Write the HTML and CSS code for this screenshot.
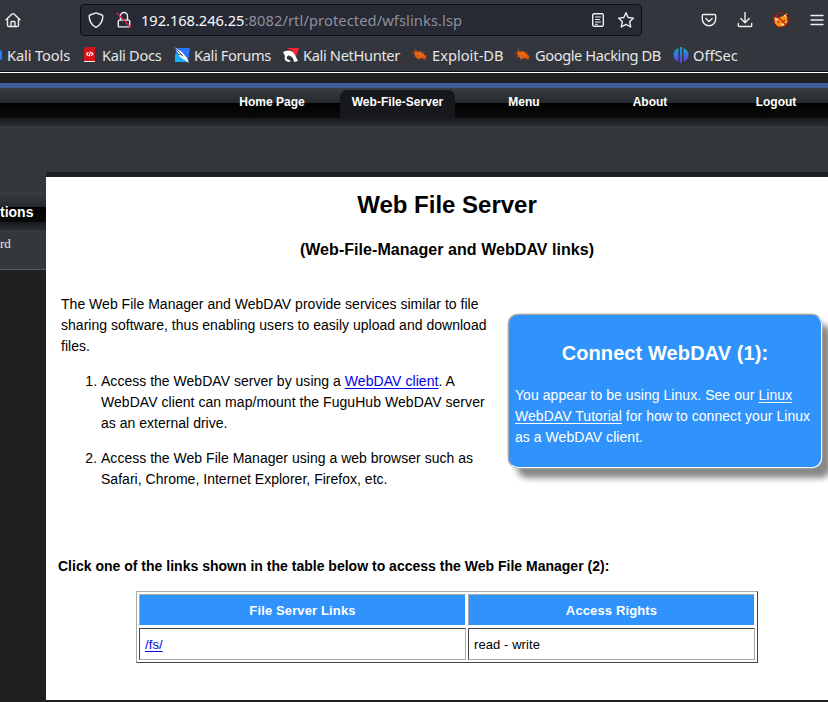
FILE: index.html
```
<!DOCTYPE html>
<html lang="en">
<head>
<meta charset="utf-8">
<title>Web File Server</title>
<link rel="stylesheet" href="styles.css">
</head>
<body>
<header class="browser">
  <div class="toolbar">
    <svg class="home" width="16" height="16" viewBox="0 0 16 16"><path d="M1 7.8 7 2.100q1-.9 2 0l6 5.700M2.500 6.700v6.200q0 1.600 1.600 1.600h7.800q1.600 0 1.600-1.600V6.700M6 14.300v-4q0-.8.8-.8h2.400q.8 0 .8.8v4"/></svg>
    <div class="urlbar">
      <svg class="shield" width="16" height="16" viewBox="0 0 16 16"><path d="M8 .9 14 3q.8.3.8 1.100c0 5.200-2.500 9.200-6.800 11.300C3.700 13.300 1.200 9.300 1.200 4.100Q1.200 3.300 2 3Z"/></svg>
      <svg class="lock" width="16" height="18" viewBox="0 0 16 18"><path d="M3.300 9.100h9.400q1 0 1 1v4.800q0 1-1 1H3.300q-1 0-1-1v-4.800q0-1 1-1M4.500 9V5a3.500 3.500 0 0 1 7 0v4"/><path class="slash" d="M1 2l13.500 14"/></svg>
      <span class="url"><b>192.168.246.25</b>:8082/rtl/protected/wfslinks.lsp</span>
      <svg class="reader" width="14" height="16" viewBox="0 0 14 16"><rect x="1.700" y="1.700" width="10.600" height="12.600" rx="1.500"/><path d="M4.500 5h5M4.500 7.500h4M4.500 10h5M4.500 12.300h2" stroke-width="1.100"/></svg>
      <svg class="star" width="18" height="18" viewBox="0 0 18 18"><path d="m9 1.700 2.200 4.800 5.300.6-3.900 3.600 1.100 5.300L9 13.400 4.300 16l1.100-5.300-3.900-3.600 5.300-.6Z"/></svg>
    </div>
    <div class="tools">
      <svg width="16" height="16" viewBox="0 0 16 16"><path d="M2.500 2.500h11q1.200 0 1.200 1.200v3.300a6.700 6.700 0 0 1-13.400 0V3.700q0-1.200 1.200-1.200M4.800 6.500 8 9.500l3.200-3"/></svg>
      <svg width="16" height="16" viewBox="0 0 16 16"><path d="M8 .5v10M3.800 6.600 8 10.700l4.200-4.100M1.300 11.500v2q0 1 1 1h11.400q1 0 1-1v-2"/></svg>
      <svg class="fox" width="16" height="16" viewBox="0 0 16 16"><path fill="#f79322" d="m1 5 4 1 5-2 4-3v6l1 3-4 4-6 1-3-3Z"/><path fill="#ffe7b8" d="m1.500 5.500 3 1.500-1.500 2Zm9-2 3-2v4ZM8 12.500l4-2-2 3.500Z"/><path fill="#302316" d="M4.500 9.500h2v1h-2Zm6-1.500h1.500v1h-1.500Z"/><circle cx="8" cy="8" r="7.300" fill="none" stroke="#c7140c" stroke-width="1"/><path d="m3 3 10 10" fill="none" stroke="#c7140c" stroke-width="1.100"/></svg>
      <svg width="14" height="16" viewBox="0 0 14 16"><path d="M1 3.500h12M1 8h12M1 12.500h12"/></svg>
    </div>
  </div>
  <nav class="bookmarks">
    <span class="mark m1"><i class="dot"></i>Kali Tools</span>
    <span class="mark m2"><svg width="16" height="16" viewBox="0 0 16 16"><path fill="#d51217" d="M2 2 4 0h10v14H2Z"/><path fill="#eee" d="M2 14h11v1H2Z"/><path fill="#851015" d="M13 1h1v14h-1Z"/><path d="M6 5.500 4.500 7 6 8.500M9.500 5.500 11 7 9.500 8.500M8.300 5l-1 4" fill="none" stroke="#fff" stroke-width="1.100"/></svg>Kali Docs</span>
    <span class="mark m3"><svg width="16" height="16" viewBox="0 0 16 16"><path fill="#2777ff" d="M2 1h14l-2 14H1Z"/><path fill="#16aefc" d="M1 7h6l7 8H1Z"/><path fill="#fff" d="m0 0 8 5 5 6 2 5-6-4-4-3-1-3Z"/><path d="m1 1 8 8M4 7l3 1" stroke="#222a35" stroke-width=".8" fill="none"/></svg>Kali Forums</span>
    <span class="mark m4"><svg width="16" height="16" viewBox="0 0 16 16"><path fill="#fb2436" d="m4 1 12 0-4 11-3-6Z"/><path fill="#fff" d="M0 5q8-4 12 3l3 6-4 1q-1-6-5-6-3 1-2 3l4 2-2 1q-6-1-4-6Z"/><path d="M1 3.500q5-2 8 .5M4 10q3-4 6 4" fill="none" stroke="#20222a" stroke-width=".8"/></svg>Kali NetHunter</span>
    <span class="mark m5"><svg width="16" height="16" viewBox="0 0 16 16"><path fill="#f06512" d="m2 4 4 1 2-1 4 3 2 3-1 2-3-1-4 1-3-3Z"/><path d="M0 6h4M3 2l3 3M2 10l4-2M6 13l2-4M12 13l-1-3M12 5l-2 2M15 9h-3M14 12l-3-2" fill="none" stroke="#c84d10" stroke-width=".8"/></svg>Exploit-DB</span>
    <span class="mark m6"><svg width="16" height="16" viewBox="0 0 16 16"><path fill="#f06512" d="m2 4 4 1 2-1 4 3 2 3-1 2-3-1-4 1-3-3Z"/><path d="M0 6h4M3 2l3 3M2 10l4-2M6 13l2-4M12 13l-1-3M12 5l-2 2M15 9h-3M14 12l-3-2" fill="none" stroke="#c84d10" stroke-width=".8"/></svg>Google Hacking DB</span>
    <span class="mark m7"><svg width="16" height="16" viewBox="0 0 16 16"><defs><linearGradient id="off" x2="0" y2="1"><stop stop-color="#0cafc0"/><stop offset="1" stop-color="#6732ee"/></linearGradient></defs><path fill="url(#off)" d="M5.500 1v13.500Q.5 13 .5 8t5-7M7 0h2v16H7Zm3.500 1q5 2 5 7t-5 6.500Z"/></svg>OffSec</span>
  </nav>
</header>
<div class="page">
  <nav class="menu">
    <a>Home Page</a><a><span class="active">Web-File-Server</span></a><a>Menu</a><a>About</a><a>Logout</a>
  </nav>
  <div class="banner"></div>
  <div class="columns">
    <aside>
      <h4>tions</h4>
      <div class="option">rd</div>
    </aside>
    <main>
      <h1>Web File Server</h1>
      <h2>(Web-File-Manager and WebDAV links)</h2>
      <div class="intro">
        <div class="text">
          <p>The Web File Manager and WebDAV provide services similar to file<br>sharing software, thus enabling users to easily upload and download<br>files.</p>
          <ol>
            <li>Access the WebDAV server by using a <a>WebDAV client</a>. A<br><span class="wide">WebDAV client can map/mount the FuguHub WebDAV server</span><br>as an external drive.</li>
            <li>Access the Web File Manager using a web browser such as<br>Safari, Chrome, Internet Explorer, Firefox, etc.</li>
          </ol>
        </div>
        <section class="connect">
          <h3>Connect WebDAV (1):</h3>
          <p>You appear to be using Linux. See our <a>Linux</a><br><a>WebDAV Tutorial</a> for how to connect your Linux<br>as a WebDAV client.</p>
        </section>
      </div>
      <p class="pick">Click one of the links shown in the table below to access the Web File Manager (2):</p>
      <table>
        <tr><th class="c1">File Server Links</th><th>Access Rights</th></tr>
        <tr><td><a>/fs/</a></td><td>read - write</td></tr>
      </table>
    </main>
  </div>
</div>
</body>
</html>
```
FILE: styles.css
```
* { box-sizing: border-box; }
body { margin: 0; width: 828px; height: 702px; overflow: hidden; background: #1f2021; font: 14px/21px "Liberation Sans", Arial, sans-serif; color: #000; }
svg { flex: none; display: block; fill: none; stroke: #ededf2; stroke-width: 1.4; stroke-linecap: round; stroke-linejoin: round; }

.browser { height: 73px; background: #33363d; border-bottom: 1px solid #fff; box-shadow: inset 0 -1px #0c0d10; font-family: "Noto Sans", sans-serif; color: #e6e6e6; overflow: hidden; }
.toolbar { height: 40px; display: flex; align-items: center; padding-left: 5px; }
.urlbar { width: 562px; height: 32px; margin-left: 59px; border: 1px solid #0e0f14; border-radius: 4px; background: #272935; display: flex; align-items: center; padding-left: 7px; }
.lock { margin-left: 12px; }
.lock .slash { stroke: #e22850; }
.url { width: 448px; margin-left: 9px; font-size: 14.67px; letter-spacing: .1px; color: #8f9098; white-space: nowrap; }
.url b { font-weight: 400; letter-spacing: -.04px; color: #fbfbfe; }
.reader { margin-left: 2px; }
.star { margin-left: 12px; }
.tools { display: flex; align-items: center; margin-left: 59px; gap: 20px; }
.tools svg:last-child { margin-left: 1px; }
.fox, .mark svg { stroke: none; }

.bookmarks { height: 30px; display: flex; align-items: center; font-size: 14.67px; line-height: 20px; }
.mark { flex: none; display: flex; align-items: center; gap: 4px; white-space: nowrap; }
.m1 { width: 82px; gap: 5px; letter-spacing: -.12px; }
.m2 { width: 92px; letter-spacing: -.33px; }
.m3 { width: 109px; letter-spacing: -.36px; }
.m4 { width: 129px; letter-spacing: -.36px; }
.m5 { width: 103px; }
.m6 { width: 158px; letter-spacing: -.42px; }
.dot { width: 2px; height: 10px; background: #287bf7; border-radius: 0 2px 2px 0; }

.page { padding-top: 10px; }
.menu { height: 43px; padding-left: 209px; display: flex; border-top: 5px solid #435d98; background: linear-gradient(#393e40 0, #25292c 15px, #000 15px, #090b0b 30px, #17191e 30px, #292d33 38px); color: #fff; font-size: 12px; font-weight: 700; line-height: 28px; text-align: center; }
.menu a { width: 126px; flex: none; height: 30px; }
.active { display: block; width: 115px; height: 28px; margin: 2px auto 0 5px; border-radius: 7px 7px 0 0; background: #17181c; line-height: 24px; letter-spacing: .03px; }
.banner { height: 46px; background: #33383b; }
.columns { display: flex; }
aside { width: 46px; height: 98px; flex: none; padding-top: 20px; background: #33383b; border-bottom: 1px solid #57595b; overflow: hidden; }
aside h4 { margin: 0; height: 38px; background: linear-gradient(#393e40 0, #25292c 15px, #000 15px, #090b0b 30px, #17191e 30px, #292d33 38px); color: #fff; font-size: 14px; line-height: 40px; }
.option { font: 13px/28px "Liberation Serif", serif; color: #e8e8e8; }
main { width: 802px; height: 523px; flex: none; margin-top: 5px; background: #fff; padding-top: 11px; }
h1 { margin: 0; font-size: 24px; line-height: 34px; text-align: center; }
h2 { margin: 17px 0 0; font-size: 16px; line-height: 22px; letter-spacing: .05px; text-align: center; }
.intro { display: flex; height: 295px; letter-spacing: .02px; }
.text { width: 462px; padding: 33px 0 0 15px; }
.text p { margin: 0; white-space: nowrap; }
ol { margin: 14px 0; padding-left: 40px; white-space: nowrap; }
li { margin-bottom: 14px; }
.wide { letter-spacing: .05px; }
a { text-underline-offset: 2px; }
.text a, td a { color: #0000ee; text-decoration: underline; }
.text a { letter-spacing: .07px; }
.connect { width: 314px; height: 154px; margin-top: 53px; padding: 24px 6px 0; background: #2f93fb; border: 1px solid; border-color: #aaa #fff #fff #aaa; border-radius: 10px; box-shadow: 0 0 0 .5px #b5b9bc, 9px 10px 6px #888; color: #fff; }
.connect h3 { margin: 0; font-size: 20px; line-height: 28px; letter-spacing: .1px; text-align: center; }
.connect p { margin: 18px 0 0; letter-spacing: .05px; white-space: nowrap; }
.connect a { text-decoration: underline; }
.pick { margin: 0 0 0 12px; font-weight: 700; letter-spacing: .01px; white-space: nowrap; }
table { width: 622px; height: 71px; margin: 14px 0 0 90px; border: 1px solid; border-color: #aaa #444 #444 #aaa; border-spacing: 2px; table-layout: fixed; font-size: 13px; line-height: 20px; letter-spacing: .08px; }
th, td { border: 1px solid; padding: 6px 5px 4px; }
th { background: #2f93fb; color: #fff; border-color: #aaa #fff #fff #aaa; letter-spacing: .13px; }
td { border-color: #444 #aaa #aaa #444; }
.c1 { width: 327px; }
```
